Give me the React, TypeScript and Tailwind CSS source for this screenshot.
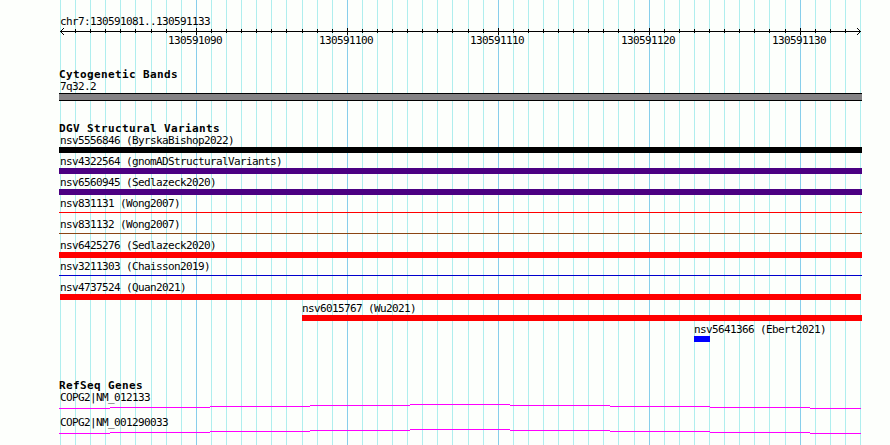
const START = 130591081;
const SPAN = 53;
const baseX = (i: number) => Math.round(60 + (i * 800) / SPAN);
const bases = Array.from({ length: SPAN + 1 }, (_, i) => i);
const isMajor = (i: number) => (START + i) % 10 === 0;
const majors = bases.filter(isMajor);

type Variant = { label: string; bar: string; row?: string };

const variants: Variant[] = [
  { label: "nsv5556846 (ByrskaBishop2022)", bar: "h-1.5 -ml-px w-[803px] bg-black" },
  { label: "nsv4322564 (gnomADStructuralVariants)", bar: "h-1.5 -ml-px w-[803px] bg-[#4b0082]" },
  { label: "nsv6560945 (Sedlazeck2020)", bar: "h-1.5 -ml-px w-[803px] bg-[#4b0082]" },
  { label: "nsv831131 (Wong2007)", bar: "mt-0.5 mb-[3px] h-px -ml-px w-[803px] bg-[#ff0000]" },
  { label: "nsv831132 (Wong2007)", bar: "mt-0.5 mb-[3px] h-px -ml-px w-[803px] bg-[#8b4513]" },
  { label: "nsv6425276 (Sedlazeck2020)", bar: "h-1.5 -ml-px w-[803px] bg-[#ff0000]" },
  { label: "nsv3211303 (Chaisson2019)", bar: "mt-0.5 mb-[3px] h-px -ml-px w-[803px] bg-[#0000cd]" },
  { label: "nsv4737524 (Quan2021)", bar: "h-1.5 w-[801px] bg-[#ff0000]" },
  { label: "nsv6015767 (Wu2021)", bar: "h-1.5 w-[560px] bg-[#ff0000]", row: "ml-[242px]" },
  { label: "nsv5641366 (Ebert2021)", bar: "h-1.5 w-4 bg-[#0000ff]", row: "ml-[634px]" },
];

const genes = ["COPG2|NM_012133", "COPG2|NM_001290033"];

// Intron line climbs one pixel every hundred, then descends again.
const segments = [
  [0, 51, 4], [51, 100, 3], [151, 100, 2], [251, 100, 1], [351, 100, 0],
  [451, 100, 1], [551, 100, 2], [651, 100, 3], [751, 51, 4],
];

function Grid() {
  return (
    <svg className="absolute inset-0" width="890" height="445" shapeRendering="crispEdges">
      {bases.map((i) => (
        <rect key={i} x={baseX(i)} y="0" width="1" height="445" fill={isMajor(i) ? "#87ceeb" : "#afeeee"} />
      ))}
    </svg>
  );
}

function Axis() {
  return (
    <svg className="-mt-px -ml-[60px] block" width="890" height="9" shapeRendering="crispEdges">
      <rect x="60" y="4" width="801" height="1" />
      {bases.slice(1, -1).map((i) =>
        isMajor(i) ? (
          <rect key={i} x={baseX(i)} y="1" width="1" height="7" />
        ) : (
          <rect key={i} x={baseX(i)} y="2" width="1" height="4" />
        ),
      )}
      {[1, 2, 3].map((d) => (
        <g key={d}>
          <rect x={60 + d} y={4 - d} width="1" height="1" />
          <rect x={60 + d} y={4 + d} width="1" height="1" />
          <rect x={860 - d} y={4 - d} width="1" height="1" />
          <rect x={860 - d} y={4 + d} width="1" height="1" />
        </g>
      ))}
    </svg>
  );
}

function Heading({ children }: { children: string }) {
  return (
    <h2 className="-ml-px h-3 text-[11px] leading-3 font-bold tracking-[0.378px]">{children}</h2>
  );
}

export default function App() {
  return (
    <div className="relative h-[445px] w-[890px] overflow-hidden bg-[#fdfffc] font-['DejaVu_Sans_Mono',monospace] text-[11px] leading-3 tracking-[-0.622px] whitespace-pre text-black">
      <Grid />
      <main className="relative flex flex-col pl-[60px]">
        <p className="mt-4 h-3">chr7:130591081..130591133</p>
        <Axis />
        <div className="-mt-px ml-[60px] flex h-3 gap-[97px] pl-[48px]">
          {majors.map((i) => (
            <span key={i} className="w-[54px] shrink-0">{START + i}</span>
          ))}
        </div>
        <section className="mt-[22px]">
          <Heading>Cytogenetic Bands</Heading>
          <p className="h-3">7q32.2</p>
          <div className="-ml-px h-2 w-[803px] border-y border-black bg-[#848284]" />
        </section>
        <section className="mt-[22px]">
          <Heading>DGV Structural Variants</Heading>
          <div className="-mt-[3px]">
            {variants.map((v) => (
              <div key={v.label} className={v.row ?? ""}>
                <p className="h-[15px] pt-[3px]">{v.label}</p>
                <div className={v.bar} />
              </div>
            ))}
          </div>
        </section>
        <section className="mt-[38px]">
          <Heading>RefSeq Genes</Heading>
          {genes.map((g) => (
            <div key={g} className="h-[25px]">
              <p className="h-3">{g}</p>
              <svg className="-ml-px block" width="802" height="5" shapeRendering="crispEdges">
                {segments.map(([x, w, y]) => (
                  <rect key={x} x={x} y={y} width={w} height="1" fill="#ff00ff" />
                ))}
              </svg>
            </div>
          ))}
        </section>
      </main>
    </div>
  );
}
